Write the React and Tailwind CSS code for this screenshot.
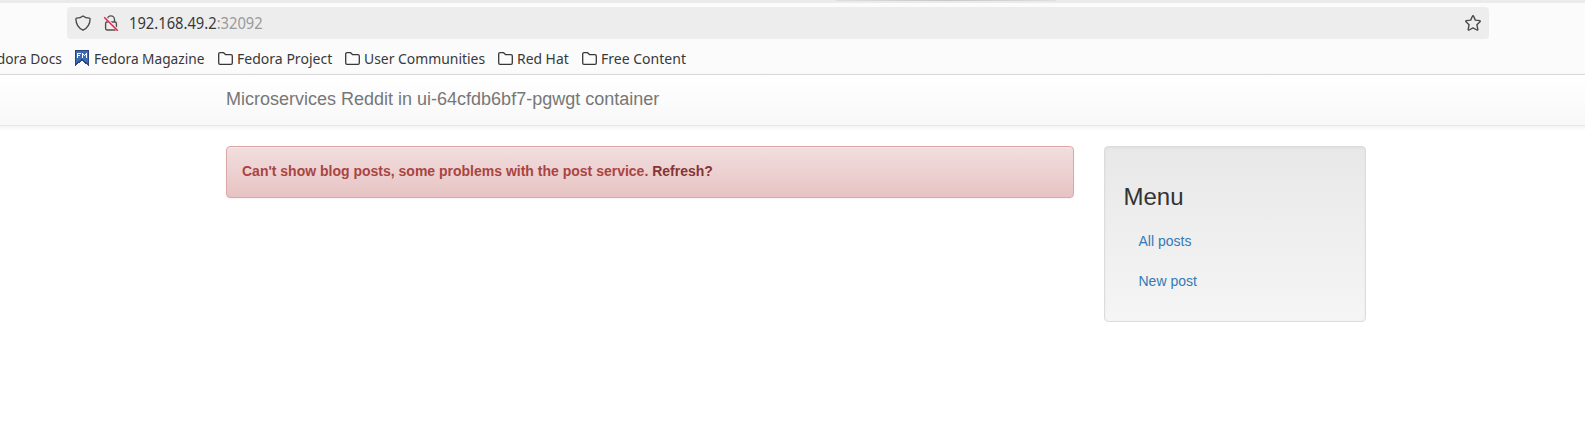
function Shield() {
  return (
    <svg className="h-4 w-4 shrink-0" viewBox="0 0 16 16" fill="none" stroke="#4a4a4c" strokeWidth="1.35" strokeLinejoin="round">
      <path d="M8 .9C6.400 2.200 4 3 1.600 3.100 1 3.200.9 3.500.9 4c.1 5 2.500 9 7.100 11.200C12.600 13 15 9 15.100 4c0-.5-.1-.8-.7-.9C12 3 9.600 2.200 8 .9Z" />
    </svg>
  );
}

function InsecureLock() {
  return (
    <svg className="h-4 w-4 shrink-0" viewBox="0 0 16 16" fill="none" stroke="#505052" strokeWidth="1.4">
      <path d="M4.300 7V4.500a3.600 3.600 0 0 1 7.200 0V7" />
      <rect x="2.600" y="7" width="10.800" height="8" rx="1.400" />
      <path d="M1.500 2 15 15.500" stroke="#ededed" strokeWidth="2.600" />
      <path d="M1.200 2.200 14.800 15.800" stroke="#e8204f" strokeWidth="1.500" />
    </svg>
  );
}

function Star() {
  return (
    <svg className="h-4 w-4 shrink-0" viewBox="0 0 16 16" fill="none" stroke="#48484a" strokeWidth="1.400" strokeLinejoin="round">
      <path d="M7.400 1.200c.3-.6.9-.6 1.200 0l1.700 3.900 4.300.5c.7.100.8.700.400 1.100l-3.100 3 .9 4.600c.1.700-.4 1-.9.700L8 12.900 4.100 15c-.5.300-1 0-.9-.7l.9-4.600-3.100-3c-.4-.4-.3-1 .4-1.100l4.300-.5Z" />
    </svg>
  );
}

function Folder() {
  return (
    <svg className="h-[13px] w-[15px] shrink-0" viewBox="0 0 15 13" fill="none" stroke="#38383a" strokeWidth="1.300" strokeLinejoin="round">
      <path d="M2 .7h3.600L7.700 2.700H13a1.300 1.300 0 0 1 1.300 1.300v7A1.300 1.300 0 0 1 13 12.300H2A1.300 1.300 0 0 1 .7 11V2A1.300 1.300 0 0 1 2 .7Z" />
    </svg>
  );
}

function MagazineIcon() {
  return (
    <svg className="h-4 w-3.5 shrink-0" viewBox="0 0 14 16" shapeRendering="crispEdges">
      <path d="M0 0h14v16l-7-5-7 5Z" fill="#3f6bb3" />
      <path d="M0 0h14v1H0ZM0 0h1v16H0ZM13 0h1v16h-1Z" fill="#2b4680" />
      <path d="M0 16v-2l7-5 7 5v2l-7-5Z" fill="#2b4680" />
      <path d="M2 3h4v1H2ZM2 5h3v1H2ZM2 3h1v5H2ZM7 3h1v5H7ZM11 3h1v5h-1ZM8 4h1v1H8ZM10 4h1v1h-1ZM9 5h1v1H9Z" fill="#fff" />
    </svg>
  );
}

const folders = [
  { label: 'Fedora Project', box: 'w-[127px]', fit: 'scale-x-[0.936]' },
  { label: 'User Communities', box: 'w-[153px]', fit: 'scale-x-[0.927]' },
  { label: 'Red Hat', box: 'w-[84px]', fit: 'scale-x-[0.925]' },
  { label: 'Free Content', box: 'w-[110px]', fit: 'scale-x-[0.935]' },
];

function BrowserChrome() {
  return (
    <header className="h-[75px] border-b border-[#dededf] bg-[#fbfbfb] font-['Noto_Sans',sans-serif] text-[#38383a]">
      <div className="h-[3px] bg-[#ebebeb] pl-[836px]">
        <div className="h-px w-[220px] bg-linear-to-r from-[#dedede] via-[#c8c8c8] to-[#dedede]" />
      </div>
      <div className="mt-1 ml-[67px] flex h-8 w-[1422px] items-center rounded-[4px] bg-[#ededed] pr-2 pl-2">
        <Shield />
        <div className="ml-3 flex"><InsecureLock /></div>
        <div className="ml-2.5 flex-1 origin-left scale-x-[0.95] text-[15.5px] leading-8 whitespace-nowrap">
          192.168.49.2<span className="text-[#99999a]">:32092</span>
        </div>
        <Star />
      </div>
      <nav className="flex h-[35px] items-center pt-[3px] text-[15px] leading-5 whitespace-nowrap">
        <div className="flex w-[62px] shrink-0 justify-end">
          <span className="origin-right scale-x-[0.92]">dora Docs</span>
        </div>
        <div className="ml-[13px] flex w-[143px] shrink-0 items-center gap-[5px]">
          <MagazineIcon />
          <span className="origin-left scale-x-[0.912]">Fedora Magazine</span>
        </div>
        {folders.map((f) => (
          <div key={f.label} className={`flex shrink-0 items-center gap-[4px] ${f.box}`}>
            <Folder />
            <span className={`origin-left ${f.fit}`}>{f.label}</span>
          </div>
        ))}
      </nav>
    </header>
  );
}

export default function App() {
  return (
    <div className="h-[424px] w-[1585px] overflow-hidden bg-white font-['Liberation_Sans',Arial,sans-serif] text-sm">
      <BrowserChrome />
      <div className="-mx-2 h-[51px] border-b border-[#e7e7e7] bg-linear-to-b from-white to-[#f8f8f8] pl-[234px] text-lg leading-[48px] text-[#777] shadow-[0_1px_5px_rgba(0,0,0,0.075)]">
        Microservices Reddit in ui-64cfdb6bf7-pgwgt container
      </div>
      <main className="mt-5 ml-[226px] flex w-[1140px] items-start justify-between">
        <div className="h-[52px] w-[848px] rounded-[4px] border border-[#dca7a7] bg-linear-to-b from-[#f2dede] to-[#e7c3c3] px-[15px] leading-[48px] font-bold text-[#a94442] shadow-[inset_0_1px_0_rgba(255,255,255,0.25),0_1px_2px_rgba(0,0,0,0.05)]">
          Can't show blog posts, some problems with the post service. <a className="text-[#843534]">Refresh?</a>
        </div>
        <aside className="h-[176px] w-[262px] rounded-[4px] border border-[#dcdcdc] bg-linear-to-b from-[#e8e8e8] to-[#f5f5f5] px-[18.5px] pt-[37px] shadow-[inset_0_1px_3px_rgba(0,0,0,0.05),0_1px_0_rgba(255,255,255,0.1)]">
          <h3 className="text-2xl leading-[26px] text-[#333]">Menu</h3>
          <nav className="mt-[11px] flex flex-col pl-[15px] text-[#337ab7]">
            <a className="leading-10">All posts</a>
            <a className="leading-10">New post</a>
          </nav>
        </aside>
      </main>
    </div>
  );
}
